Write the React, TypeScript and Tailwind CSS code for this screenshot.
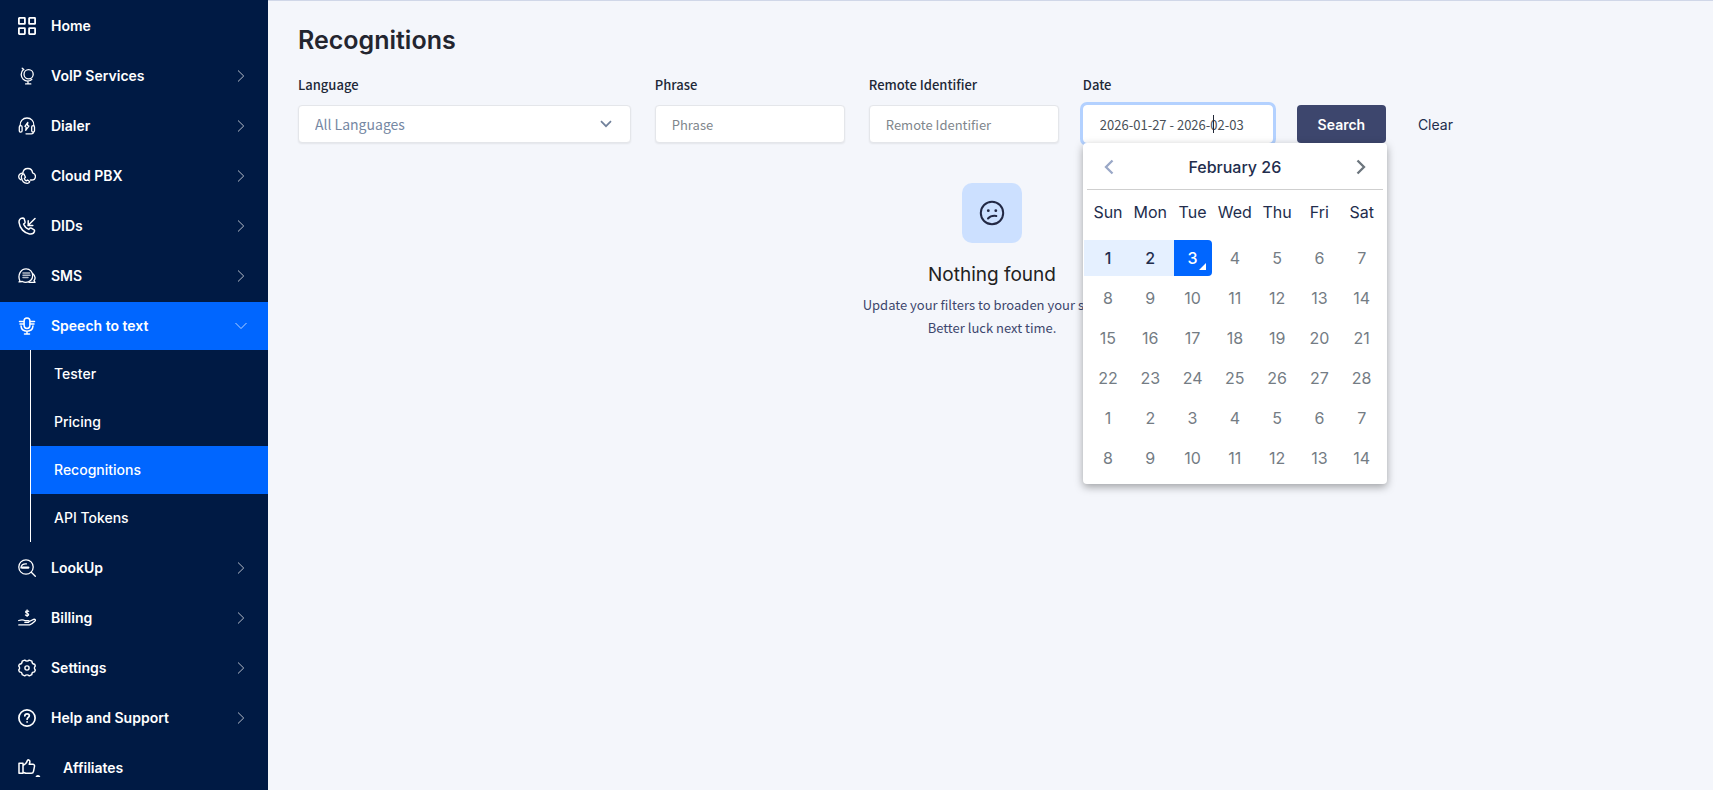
import { useState, type ReactNode } from 'react'
import clsx from 'clsx'

const iconProps = {
  width: 18,
  height: 18,
  viewBox: '0 0 18 18',
  fill: 'none',
  stroke: 'currentColor',
  strokeWidth: 1.3,
  strokeLinecap: 'round' as const,
  strokeLinejoin: 'round' as const,
  className: 'shrink-0',
  'aria-hidden': true,
}

const icons: Record<string, ReactNode> = {
  home: (
    <svg {...iconProps} strokeWidth={1.8} strokeLinejoin="miter">
      <rect x="0.9" y="0.9" width="6" height="6" rx="0.5" />
      <rect x="11.1" y="0.9" width="6" height="6" rx="0.5" />
      <rect x="0.9" y="11.1" width="6" height="6" rx="0.5" />
      <rect x="11.1" y="11.1" width="6" height="6" rx="0.5" />
    </svg>
  ),
  globe: (
    <svg {...iconProps}>
      <circle cx="10.6" cy="7.2" r="4.6" />
      <path d="M4.2 1.2l1.6 1.4M5.4 2.6C2.4 5.4 2.6 9.8 5.2 12.2c2.4 2.1 6 2.2 8.6.2M10 14v2.5M7.6 16.900h5.200" />
    </svg>
  ),
  headset: (
    <svg {...iconProps}>
      <path d="M2.2 8.600C1.700 4 5 1 9 1s7.300 3 6.800 7.600" />
      <rect x="1.3" y="8.6" width="2.8" height="6.6" rx="1.4" />
      <rect x="13.7" y="8.6" width="2.8" height="6.6" rx="1.4" />
      <path d="M15.3 15.200c0 1.200-.8 1.600-2 1.600H8M9.800 5.400L6.900 9.300l1.300 1-.5 3 3.200-4.200-1.500-.8z" />
    </svg>
  ),
  cloud: (
    <svg {...iconProps}>
      <path d="M4.8 6.200C5.200 3.200 7.300 1.400 10 1.500c2.500.1 4.300 1.900 4.600 4.300 2 .6 3 2.100 2.800 3.900-.2 2-1.700 3.300-3.800 3.300h-1.200" />
      <path d="M4.8 6.200C2.200 6.200.6 8 .7 9.900c.1 1.500 1 2.500 2.300 2.900" />
      <path d="M5.8 6.900c-1.700.2-2.700 1.700-2.400 3.700.5 3 2.900 5.400 5.700 5.700 1.400.1 2.400-.5 2.700-1.600L9.600 13l-1.400.9c-1.100-.6-1.700-1.400-1.900-2.500l1.200-1.100z" />
    </svg>
  ),
  phone: (
    <svg {...iconProps} strokeWidth={1.5}>
      <path d="M4.6 1C2.100 1.200.8 2.900 1.100 5.600c.7 5.900 5 10.400 10.400 11.300 2.400.4 4.400-.7 5-2.600.2-.8-.1-1.300-.7-1.700l-2.500-1.400c-.7-.4-1.300-.2-1.800.4l-.7.8C8.200 11.300 6.500 9.600 5.600 7.100l1-.8c.5-.5.6-1 .4-1.700L6.200 1.900C5.900 1.200 5.400 1 4.600 1z" />
      <path d="M17 1.500l-7 7M10.200 3.800v4.600h4.600" />
    </svg>
  ),
  sms: (
    <svg {...iconProps}>
      <path d="M2.1 14.600c-3.200-7 1-12.800 6-12.800 4 0 6.600 3.200 6.600 6.600 0 4.200-3.300 7-7 7-1.300 0-2.400-.4-3.300-.9l-3.400.4z" />
      <path d="M14.900 6.800c2.300 1.900 2.600 4.700 1.100 6.900l1.100 1.600c-2.700.1-4 .3-6 .1" />
      <path d="M5 5.900h6.600M5 8.200h7M5 10.500h5" strokeWidth="1.5" opacity=".7" />
    </svg>
  ),
  mic: (
    <svg {...iconProps} strokeWidth={1.5}>
      <rect x="6.1" y="0.9" width="5.8" height="10.6" rx="2.9" />
      <path d="M3 8.900c.3 3.400 2.700 5.300 6 5.300s5.700-1.900 6-5.300M9 14.400v2.600M6.500 17.100h5M1.500 4.600h4.200M2 6.900h3.700M12.300 4.600h4.200M12.300 6.900H16" />
    </svg>
  ),
  lookup: (
    <svg {...iconProps}>
      <circle cx="8" cy="8" r="7.2" />
      <path d="M13.3 13.300l4 4M2.900 8.800C3.300 6.200 5.600 4.700 8.400 4.900" />
      <path d="M4.200 8.600h6" strokeWidth="2.4" />
    </svg>
  ),
  billing: (
    <svg {...iconProps}>
      <path d="M.7 11.500c3-.9 4.800-.7 6.500.2h3.100c1 0 1.200 1.300.2 1.600H6.800M11.200 12.500l4.400-2.100c1.400-.6 2.400.7 1.400 1.600-1.400 1.300-3.500 3.300-5.300 3.900H.8" />
      <path d="M10.700 2.400C10 1.500 7.600 1.500 7.600 3s3.100.9 3.100 2.500-2.600 1.500-3.300.5M9.100.9v6.600" strokeWidth="1.2" />
    </svg>
  ),
  settings: (
    <svg {...iconProps} strokeWidth={1.4}>
      <path d="M6.700 1.100c1.300 1.400 3.300 1.400 4.600 0l2.600 1.100c0 1.900 1 2.900 2.800 3l.6 1.800c-1.200 1.200-1.200 2.800 0 4l-.8 1.900c-1.800 0-2.700.9-2.700 2.800l-2.500 1.200c-1.300-1.400-3.300-1.400-4.600 0l-2.500-1.200c0-1.900-.9-2.800-2.700-2.800L.7 11c1.200-1.200 1.200-2.800 0-4l.7-1.800c1.800-.1 2.800-1.100 2.800-3z" />
      <circle cx="9" cy="9" r="2.1" />
    </svg>
  ),
  help: (
    <svg {...iconProps} strokeWidth={1.7}>
      <circle cx="9" cy="9" r="8.1" />
      <path d="M6.800 6.900c.1-1.400 1-2.100 2.300-2.100s2.200.8 2.200 1.900c0 1.600-2.200 1.800-2.200 3.500M9.100 12.800v.2" />
    </svg>
  ),
  thumb: (
    <svg {...iconProps} width={23} viewBox="0 0 23 18" strokeWidth={1.5}>
      <path d="M1 4.200h4v10H1zM5 6.500C7.600 5.300 8.800 3.800 9.300 1.800c.3-1.400 2.600-1.200 2.600.8 0 1-.2 1.700-.7 2.700h3.600c1.300 0 1.900.9 1.700 2l-1 5c-.2 1.200-1 1.900-2.200 1.900H8.200C6.800 14.200 6.400 13.600 5 13.300" />
      <path d="M17.500 18c.4-2.800 4.400-2.800 4.800 0z" fill="currentColor" stroke="none" />
    </svg>
  ),
}

const MENU = [
  { label: 'Home', icon: 'home' },
  { label: 'VoIP Services', icon: 'globe', more: true },
  { label: 'Dialer', icon: 'headset', more: true },
  { label: 'Cloud PBX', icon: 'cloud', more: true },
  { label: 'DIDs', icon: 'phone', more: true },
  { label: 'SMS', icon: 'sms', more: true },
  { label: 'Speech to text', icon: 'mic', more: true, children: ['Tester', 'Pricing', 'Recognitions', 'API Tokens'] },
  { label: 'LookUp', icon: 'lookup', more: true },
  { label: 'Billing', icon: 'billing', more: true },
  { label: 'Settings', icon: 'settings', more: true },
  { label: 'Help and Support', icon: 'help', more: true },
  { label: 'Affiliates', icon: 'thumb' },
]

const DAYS = ['Sun', 'Mon', 'Tue', 'Wed', 'Thu', 'Fri', 'Sat']

// February 2026 starts on a Sunday, the last two rows belong to March
const WEEKS = [0, 7, 14, 21, 0, 7].map((start) => DAYS.map((_, i) => start + i + 1))

const fieldClass =
  "h-[38px] w-full rounded-[4px] border bg-white px-4 font-['Noto_Sans_CJK_SC',sans-serif] shadow-[0_1px_2px_rgba(0,0,0,0.07)] outline-none"
const inputClass = 'border-[#e4e6ea] text-[13px] text-[#495057] placeholder:text-[#80868c]'
const labelClass =
  "mb-2 block font-['Noto_Sans_CJK_SC',sans-serif] text-[13px] leading-6 font-medium text-[#212837]"

function Chevron({ open }: { open: boolean }) {
  return (
    <svg width="12" height="12" viewBox="0 0 12 12" fill="none" stroke="currentColor" className="shrink-0 text-white/70" aria-hidden>
      <path d={open ? 'M.5 3l5.500 5.500L11.500 3' : 'M3 .5L8.700 6 3 11.500'} />
    </svg>
  )
}

function Sidebar() {
  return (
    <nav className="flex w-[268px] shrink-0 flex-col gap-[2px] overflow-hidden bg-[#001a44] pt-[2px] text-[14px] text-white">
      {MENU.map(({ label, icon, more, children }) => (
        <div key={label} className="shrink-0">
          <a
            href="#"
            className={clsx(
              'flex h-12 items-center pr-[21px] pl-[18px] font-semibold',
              icon === 'thumb' ? 'gap-[22px]' : 'gap-[15px]',
              children && 'bg-[#0066ff]'
            )}
          >
            {icons[icon]}
            <span className="flex-1 pb-[2px]">{label}</span>
            {more && <Chevron open={!!children} />}
          </a>
          {children && (
            <div className="ml-[30px] border-l border-white">
              {children.map((child) => (
                <a
                  key={child}
                  href="#"
                  className={clsx('flex h-12 items-center pb-[2px] pl-[23px] font-medium', child === 'Recognitions' && 'bg-[#0066ff]')}
                >
                  {child}
                </a>
              ))}
            </div>
          )}
        </div>
      ))}
    </nav>
  )
}

function Calendar() {
  return (
    <div className="absolute top-full left-3 z-10 w-[304px] rounded-[4px] bg-white px-1 pb-[6px] text-[16px] text-[#222d4d] shadow-[0_3px_8px_rgba(0,0,0,0.35)]">
      <div className="flex h-[47px] items-center justify-between border-b border-[#cfcfcf] px-4 pt-[2px]">
        <button type="button" aria-label="Previous month" className="text-[#9aa8c7]">
          <svg width="13" height="16" viewBox="0 0 13 16" fill="none" stroke="currentColor" strokeWidth="2.3">
            <path d="M9.500 1.500L3 8l6.500 6.500" />
          </svg>
        </button>
        <span className="font-medium">February 26</span>
        <button type="button" aria-label="Next month" className="text-[#6c757d]">
          <svg width="13" height="16" viewBox="0 0 13 16" fill="none" stroke="currentColor" strokeWidth="2.3">
            <path d="M3.500 1.500L10 8l-6.500 6.500" />
          </svg>
        </button>
      </div>
      <table className="w-full table-fixed text-center">
        <thead>
          <tr>
            {DAYS.map((day) => (
              <th key={day} className="h-12 p-0 pb-1 font-normal">{day}</th>
            ))}
          </tr>
        </thead>
        <tbody>
          {WEEKS.map((week, row) => (
            <tr key={row}>
              {week.map((day) => {
                const inRange = row === 0 && day < 3
                const selected = row === 0 && day === 3
                return (
                  <td key={day} className="h-10 p-0">
                    <button
                      type="button"
                      className={clsx(
                        'relative mx-auto block h-9 w-[38px]',
                        inRange && 'bg-[#e5f0ff] font-medium shadow-[-5px_0_0_#e5f0ff,5px_0_0_#e5f0ff]',
                        selected && 'rounded-r-[4px] bg-[#0066ff] font-medium text-white',
                        !inRange && !selected && 'text-[#747c84]'
                      )}
                    >
                      {day}
                      {selected && (
                        <svg width="7" height="7" viewBox="0 0 7 7" className="absolute right-[6px] bottom-[6px]" aria-hidden>
                          <path d="M7 0v7H0z" fill="#fff" />
                        </svg>
                      )}
                    </button>
                  </td>
                )
              })}
            </tr>
          ))}
        </tbody>
      </table>
    </div>
  )
}

export default function App() {
  const [phrase, setPhrase] = useState('')
  const [remote, setRemote] = useState('')
  const [date, setDate] = useState('2026-01-27 - 2026-02-03')

  return (
    <div className="flex h-screen overflow-hidden bg-[#f4f6fb] font-['Inter',sans-serif]">
      <Sidebar />
      <main className="min-w-0 flex-1 border-t border-[#d0d7e8]">
        <h1 className="mt-5 pl-[30px] text-[25px] leading-[38px] font-semibold text-[#23252f]">Recognitions</h1>

        {/* Filters */}
        <form className="mt-[14px] flex items-end pl-[18px]">
          <div className="w-1/4 px-3">
            <label htmlFor="language" className={labelClass}>Language</label>
            <div className="relative">
              <select id="language" className={clsx(fieldClass, 'appearance-none border-[#e4e6ea] text-[14px] text-[#7688a3]')}>
                <option>All Languages</option>
              </select>
              <svg
                width="12"
                height="8"
                viewBox="0 0 12 8"
                fill="none"
                stroke="#71819b"
                strokeWidth="1.7"
                className="pointer-events-none absolute top-[15px] right-[19px]"
                aria-hidden
              >
                <path d="M1 1.200l5 5 5-5" />
              </svg>
            </div>
          </div>
          <div className="w-[15%] px-3">
            <label htmlFor="phrase" className={labelClass}>Phrase</label>
            <input
              id="phrase"
              placeholder="Phrase"
              value={phrase}
              onChange={(e) => setPhrase(e.target.value)}
              className={clsx(fieldClass, inputClass)}
            />
          </div>
          <div className="w-[15%] px-3">
            <label htmlFor="remote" className={labelClass}>Remote Identifier</label>
            <input
              id="remote"
              placeholder="Remote Identifier"
              value={remote}
              onChange={(e) => setRemote(e.target.value)}
              className={clsx(fieldClass, inputClass)}
            />
          </div>
          <div className="relative w-[15%] px-3">
            <label htmlFor="date" className={labelClass}>Date</label>
            <input
              id="date"
              value={date}
              onChange={(e) => setDate(e.target.value)}
              className={clsx(fieldClass, 'border-white text-[13px] text-[#495057] ring-[3px] ring-[#b3d1ff]')}
            />
            <span className="absolute bottom-[10px] left-[142px] h-[18px] w-px bg-[#212837]" />
            <Calendar />
          </div>
          <div className="flex px-3">
            <button type="button" className="h-[38px] w-[89px] rounded-[4px] bg-[#3d466d] text-[14px] font-semibold text-white">
              Search
            </button>
            <button type="button" className="ml-4 h-[38px] px-4 text-[14px] text-[#222d4d]">Clear</button>
          </div>
        </form>

        {/* Empty state */}
        <section className="mt-10 flex flex-col items-center pl-[3px] text-center">
          <div className="flex size-[60px] items-center justify-center rounded-[10px] bg-[#cce0ff]">
            <svg width="26" height="26" viewBox="0 0 26 26" fill="none" stroke="#222844" strokeWidth="2" strokeLinecap="round" aria-hidden>
              <circle cx="13" cy="13" r="11.2" />
              <path d="M9 18.500c2-2.200 4.500-3 8.300-2.500" />
              <path d="M9.300 10.600v.1M16.800 10.600v.1" strokeWidth="2.8" />
            </svg>
          </div>
          <h2 className="mt-[18px] text-[19px] leading-[28px] text-[#222]">Nothing found</h2>
          <p className="mt-1 font-['Noto_Sans_CJK_SC',sans-serif] text-[13px] leading-[23px] text-[#3d466d]">
            Update your filters to broaden your search.
            <br />
            Better luck next time.
          </p>
        </section>
      </main>
    </div>
  )
}
